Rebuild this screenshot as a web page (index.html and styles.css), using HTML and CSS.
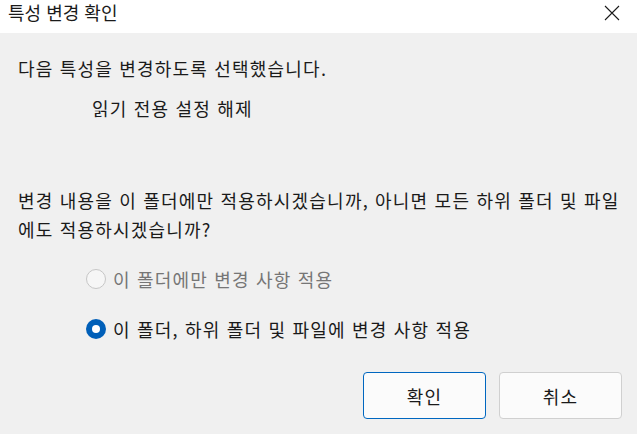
FILE: index.html
```html
<!DOCTYPE html>
<html lang="ko">
<head>
<meta charset="utf-8">
<link rel="stylesheet" href="styles.css">
</head>
<body>
<div class="dialog">
  <div class="titlebar">
    <span class="title">특성 변경 확인</span>
    <span class="close" aria-label="닫기">
      <svg width="16" height="16" viewBox="0 0 16 16"><path d="M1 1 L15 15 M15 1 L1 15" stroke="#1a1a1a" stroke-width="1.1" fill="none"/></svg>
    </span>
  </div>
  <div class="content">
    <p class="intro">다음 특성을 변경하도록 선택했습니다.</p>
    <p class="attr">읽기 전용 설정 해제</p>
    <p class="question">변경 내용을 이 폴더에만 적용하시겠습니까, 아니면 모든 하위 폴더 및 파일에도 적용하시겠습니까?</p>
    <div class="options">
      <label class="option disabled"><span class="radio"></span><span>이 폴더에만 변경 사항 적용</span></label>
      <label class="option"><span class="radio checked"></span><span>이 폴더, 하위 폴더 및 파일에 변경 사항 적용</span></label>
    </div>
  </div>
  <div class="buttons">
    <button class="btn primary">확인</button>
    <button class="btn">취소</button>
  </div>
</div>
</body>
</html>
```
FILE: styles.css
```css
html, body {
  margin: 0;
  padding: 0;
}
body {
  width: 637px;
  height: 434px;
  background: #f0f0f0;
  font-family: "Noto Sans CJK KR", "Noto Sans", sans-serif;
  font-size: 18px;
  color: #1a1a1a;
  overflow: hidden;
}
.dialog {
  display: flex;
  flex-direction: column;
  height: 434px;
}
.titlebar {
  height: 33px;
  background: #ffffff;
  display: flex;
  align-items: center;
  justify-content: space-between;
  padding: 0 17px 0 8px;
}
.title {
  font-size: 18px;
  line-height: 24px;
  margin-top: -10px;
  color: #1a1a1a;
}
.close {
  display: flex;
  margin-top: -8px;
}
.content {
  padding: 0 16px 0 18px;
  flex: 1;
  letter-spacing: 1.2px;
}
.content p {
  margin: 0;
  line-height: 28px;
}
.intro {
  margin-top: 21px !important;
}
.attr {
  margin-top: 12px !important;
  padding-left: 74px;
}
.question {
  margin-top: 64px !important;
  line-height: 29px !important;
}
.options {
  display: flex;
  flex-direction: column;
  gap: 22px;
  margin-top: 21px;
  padding-left: 68px;
}
.option {
  display: flex;
  align-items: center;
  gap: 7px;
  line-height: 28px;
}
.option.disabled {
  color: #767676;
}
.radio {
  width: 20px;
  height: 20px;
  border-radius: 50%;
  box-sizing: border-box;
  border: 1px solid #c6c6c6;
  background: #f6f6f6;
  display: flex;
  align-items: center;
  justify-content: center;
}
.radio.checked {
  border: none;
  background: #005fb8;
}
.radio.checked::after {
  content: "";
  width: 8px;
  height: 8px;
  border-radius: 50%;
  background: #ffffff;
}
.buttons {
  display: flex;
  justify-content: flex-end;
  gap: 13px;
  padding: 0 15px 15px 0;
}
.btn {
  width: 123px;
  height: 47px;
  box-sizing: border-box;
  background: #fbfbfb;
  border: 1px solid #d0d0d0;
  border-radius: 4px;
  font-family: inherit;
  font-size: 18px;
  letter-spacing: 1.2px;
  color: #1a1a1a;
  padding: 0;
}
.btn.primary {
  border: 1.5px solid #0067c0;
}
```
